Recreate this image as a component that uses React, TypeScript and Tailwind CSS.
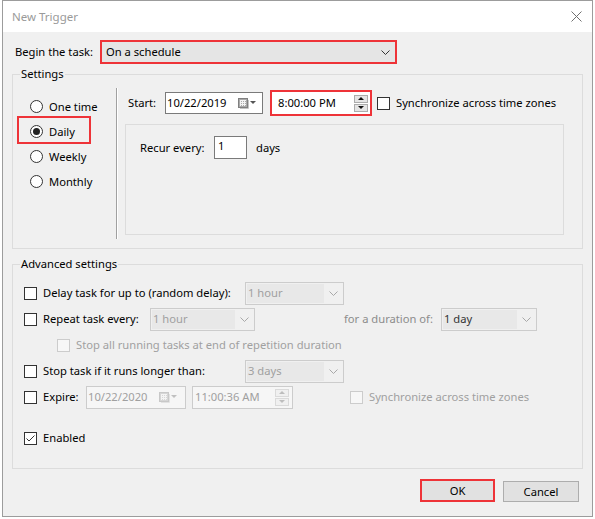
import React from 'react'

function Chevron({ color = '#333' }: { color?: string }) {
  return (
    <svg width="9" height="5" viewBox="0 0 9 5">
      <path d="M0.5 0.5 L4.5 4.5 L8.5 0.5" fill="none" stroke={color} strokeWidth="1" />
    </svg>
  )
}

function CalIcon({ disabled }: { disabled?: boolean }) {
  const s = disabled ? '#c8c8c8' : '#808080'
  const f = disabled ? '#d6d6d6' : '#a9a9a9'
  const t = disabled ? '#c0c0c0' : '#555'
  return (
    <svg width="19" height="11" viewBox="0 0 19 11">
      <rect x="0.5" y="0.5" width="9" height="9" fill={f} stroke={s} />
      <path d="M2 2.5 H8 M2 4.5 H8 M2 6.5 H8 M2.5 2 V8 M4.5 2 V8 M6.5 2 V8" stroke="#f4f4f4" strokeWidth="1" />
      <path d="M10.5 2 V10.5 H2" stroke={disabled ? '#e2e2e2' : '#c4c4c4'} fill="none" />
      <path d="M12 3 H18 L15 6 Z" fill={t} />
    </svg>
  )
}

function Checkbox({ checked, disabled }: { checked?: boolean; disabled?: boolean }) {
  return (
    <div
      className={`w-[13px] h-[13px] shrink-0 border flex items-center justify-center ${
        disabled ? 'border-[#cccccc] bg-[#f7f7f7]' : 'border-[#333333] bg-white'
      }`}
    >
      {checked && (
        <svg width="11" height="11" viewBox="0 0 11 11">
          <path d="M1.5 5.5 L4 8 L9.5 2.5" fill="none" stroke="#333" strokeWidth="1" />
        </svg>
      )}
    </div>
  )
}

function Radio({ checked }: { checked?: boolean }) {
  return (
    <div className="w-[13px] h-[13px] shrink-0 rounded-full border border-[#333333] bg-white flex items-center justify-center">
      {checked && <div className="w-[7px] h-[7px] rounded-full bg-[#222]" />}
    </div>
  )
}

function Combo({ value, w, dark }: { value: string; w: string; dark?: boolean }) {
  return (
    <div className={`${w} h-[23px] shrink-0 border border-[#cccccc] flex p-[1px]`}>
      <div className={`flex-1 bg-[#e8e8e8] pl-[1px] flex items-center ${dark ? 'text-[#333]' : 'text-[#a0a0a0]'}`}>
        {value}
      </div>
      <div className="w-[18px] flex items-center justify-center">
        <Chevron color="#a8a8a8" />
      </div>
    </div>
  )
}

function Spinner({ disabled }: { disabled?: boolean }) {
  const c = disabled ? '#bdbdbd' : '#111'
  const b = disabled ? 'border-[#dadada] bg-[#f0f0f0]' : 'border-[#acacac] bg-[#e5e5e5]'
  return (
    <div className="flex flex-col gap-[1px]">
      <div className={`w-[14px] h-[8px] border ${b} flex items-center justify-center`}>
        <svg width="6" height="3" viewBox="0 0 6 3">
          <path d="M0 3 L3 0 L6 3 Z" fill={c} />
        </svg>
      </div>
      <div className={`w-[14px] h-[8px] border ${b} flex items-center justify-center`}>
        <svg width="6" height="3" viewBox="0 0 6 3">
          <path d="M0 0 L3 3 L6 0 Z" fill={c} />
        </svg>
      </div>
    </div>
  )
}

function Group({ label, h, children }: { label: string; h: string; children: React.ReactNode }) {
  return (
    <div className={`relative ${h} border border-[#dcdcdc]`}>
      <span className="absolute left-[7px] top-[-9px] px-[1px] bg-[#f0f0f0] leading-[16px]">{label}</span>
      {children}
    </div>
  )
}

export default function App() {
  const red = 'border-2 border-[#ee3338]'
  return (
    <div className="w-[595px] h-[519px] bg-white pl-[2px] font-['Noto_Sans',sans-serif] text-[11.2px] leading-[16px] text-black">
      <div className="w-[591px] h-[517px] border border-[#9c9c9c] flex flex-col">
        {/* title bar */}
        <div className="h-[31px] bg-white flex items-center justify-between pl-[9px] pr-[10px] text-[#9a9a9a] text-[11.5px]">
          <span>New Trigger</span>
          <svg width="11" height="11" viewBox="0 0 11 11">
            <path d="M0.5 0.5 L10.5 10.5 M10.5 0.5 L0.5 10.5" stroke="#707070" strokeWidth="1" />
          </svg>
        </div>

        <div className="flex-1 bg-[#f0f0f0] px-[9px] pt-[8px]">
          {/* begin the task */}
          <div className="flex items-center h-[24px]">
            <span className="pl-[3px] w-[88px]">Begin the task:</span>
            <div className={`w-[297px] h-[24px] ${red} bg-[#e5e5e5] flex items-center justify-between pl-[4px] pr-[5px]`}>
              <span>On a schedule</span>
              <Chevron />
            </div>
          </div>

          {/* settings */}
          <div className="mt-[10px]">
            <Group label="Settings" h="h-[175px]">
              <div className="flex">
                <div className="w-[103px] pt-[19px]">
                  <div className="h-[25px] pl-[17px] flex items-center">
                    <Radio />
                    <span className="ml-[6px]">One time</span>
                  </div>
                  <div className="relative h-[25px] pl-[17px] flex items-center">
                    <span className={`absolute left-[4px] top-[-3px] w-[74px] h-[28px] ${red}`} />
                    <Radio checked />
                    <span className="ml-[6px]">Daily</span>
                  </div>
                  <div className="h-[25px] pl-[17px] flex items-center">
                    <Radio />
                    <span className="ml-[6px]">Weekly</span>
                  </div>
                  <div className="h-[25px] pl-[17px] flex items-center">
                    <Radio />
                    <span className="ml-[6px]">Monthly</span>
                  </div>
                </div>

                <div className="mt-[13px] h-[151px] w-[2px] border-l border-[#a0a0a0] border-r border-r-white" />

                <div className="flex flex-col">
                  <div className="mt-[15px] h-[26px] flex items-center">
                    <span className="pl-[10px] w-[47px]">Start:</span>
                    <div className="w-[98px] h-[22px] border border-[#7a7a7a] bg-white flex items-center justify-between pl-[1px] pr-[5px]">
                      <span>10/22/2019</span>
                      <CalIcon />
                    </div>
                    <div className={`ml-[7px] w-[102px] h-[26px] ${red} bg-white flex items-center justify-between pl-[6px] pr-[2px]`}>
                      <span>8:00:00 PM</span>
                      <Spinner />
                    </div>
                    <div className="ml-[5px]">
                      <Checkbox />
                    </div>
                    <span className="ml-[6px]">Synchronize across time zones</span>
                  </div>

                  <div className="ml-[7px] mt-[8px] w-[439px] h-[111px] border border-[#dcdcdc]">
                    <div className="mt-[11px] pl-[14px] h-[23px] flex items-center">
                      <span className="w-[74px]">Recur every:</span>
                      <div className="w-[33px] h-[23px] border border-[#7a7a7a] bg-white pl-[3px] pt-[1px]">1</div>
                      <span className="ml-[9px]">days</span>
                    </div>
                  </div>
                </div>
              </div>
            </Group>
          </div>

          {/* advanced settings */}
          <div className="mt-[15px]">
            <Group label="Advanced settings" h="h-[205px]">
              <div className="pt-[15px]">
                <div className="h-[26px] pl-[11px] flex items-center">
                  <Checkbox />
                  <span className="ml-[6px] w-[202px]">Delay task for up to (random delay):</span>
                  <Combo value="1 hour" w="w-[99px]" />
                </div>
                <div className="h-[26px] pl-[11px] flex items-center">
                  <Checkbox />
                  <span className="ml-[6px] w-[107px]">Repeat task every:</span>
                  <Combo value="1 hour" w="w-[105px]" />
                  <span className="ml-[89px] w-[97px] text-[#8c8c8c]">for a duration of:</span>
                  <Combo value="1 day" w="w-[96px]" dark />
                </div>
                <div className="h-[26px] pl-[44px] flex items-center">
                  <Checkbox disabled />
                  <span className="ml-[6px] text-[#a0a0a0]">Stop all running tasks at end of repetition duration</span>
                </div>
                <div className="h-[26px] pl-[11px] flex items-center">
                  <Checkbox />
                  <span className="ml-[6px] w-[202px]">Stop task if it runs longer than:</span>
                  <Combo value="3 days" w="w-[99px]" />
                </div>
                <div className="h-[26px] pl-[11px] flex items-center">
                  <Checkbox />
                  <span className="ml-[6px] w-[43px]">Expire:</span>
                  <div className="w-[100px] h-[23px] border border-[#cccccc] bg-[#f6f6f6] text-[#a0a0a0] flex items-center justify-between pl-[1px] pr-[7px]">
                    <span>10/22/2020</span>
                    <CalIcon disabled />
                  </div>
                  <div className="ml-[6px] w-[101px] h-[23px] border border-[#cccccc] bg-[#f6f6f6] text-[#a0a0a0] flex items-center justify-between pl-[2px] pr-[3px]">
                    <span>11:00:36 AM</span>
                    <Spinner disabled />
                  </div>
                  <div className="ml-[57px]">
                    <Checkbox disabled />
                  </div>
                  <span className="ml-[6px] text-[#a0a0a0]">Synchronize across time zones</span>
                </div>
                <div className="mt-[15px] h-[26px] pl-[11px] flex items-center">
                  <Checkbox checked />
                  <span className="ml-[6px]">Enabled</span>
                </div>
              </div>
            </Group>
          </div>

          {/* buttons */}
          <div className="mt-[10px] flex justify-end items-start pr-[4px]">
            <button className={`w-[75px] h-[23px] ${red} bg-[#e1e1e1] flex items-center justify-center`}>OK</button>
            <button className="ml-[8px] mt-[2px] w-[76px] h-[21px] border border-[#adadad] bg-[#e1e1e1] flex items-center justify-center">
              Cancel
            </button>
          </div>
        </div>
      </div>
    </div>
  )
}
